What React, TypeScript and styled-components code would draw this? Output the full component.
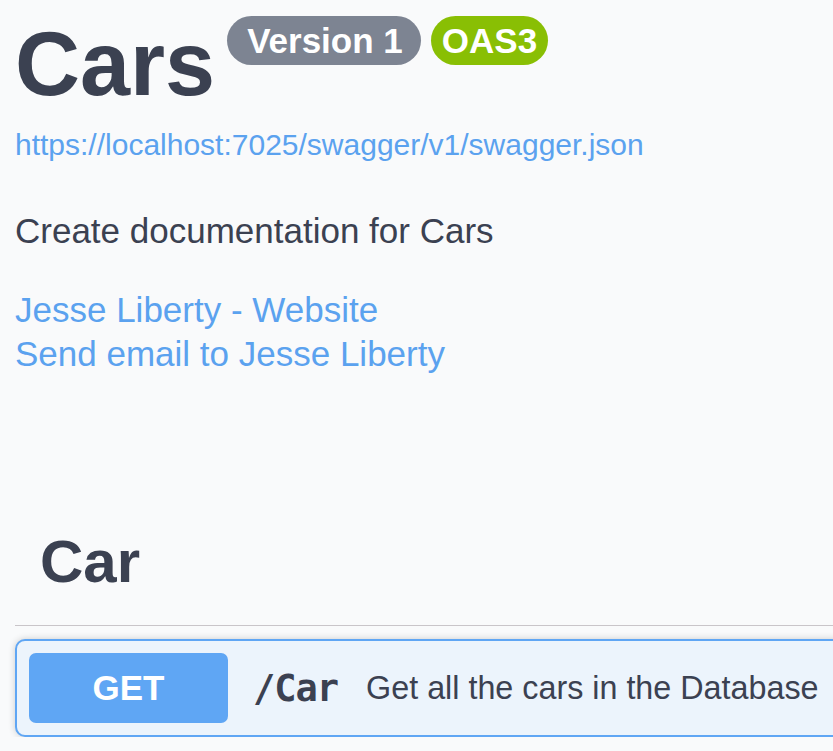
import React from 'react';
import styled, { createGlobalStyle } from 'styled-components';

const GlobalStyle = createGlobalStyle`
    html, body {
        margin: 0;
        padding: 0;
        background: #f9fafb;
        overflow: hidden;
    }

    body {
        font-family: "Liberation Sans", Arial, sans-serif;
        color: #3b4151;
    }
`;

// the op block runs off the right edge in the reference, so the page is wider than the window
const Page = styled.div`
    width: 960px;
    padding-left: 15px;
`;

const Info = styled.div`
    display: flex;
    flex-direction: column;
    align-items: flex-start;
`;

const HeaderRow = styled.div`
    display: flex;
    align-items: flex-start;
`;

const Title = styled.h1`
    margin: 19px 0 0 0;
    font-size: 90px;
    line-height: 90px;
    font-weight: 700;
    color: #3b4151;
`;

const Badges = styled.div`
    display: flex;
    gap: 10px;
    margin: 16px 0 0 12px;
`;

const Badge = styled.span<{ tone: string; padLeft: number; padRight: number }>`
    display: inline-block;
    height: 49px;
    line-height: 49px;
    padding: 0 ${({ padRight }) => padRight}px 0 ${({ padLeft }) => padLeft}px;
    border-radius: 25px;
    background: ${({ tone }) => tone};
    color: #fff;
    font-size: 35px;
    font-weight: 700;
`;

const BaseUrl = styled.a`
    display: block;
    margin-top: 18px;
    font-size: 30px;
    line-height: 36px;
    color: #5ba2ef;
    text-decoration: none;
`;

const Description = styled.p`
    margin: 46px 0 0 0;
    font-size: 35px;
    line-height: 44px;
    color: #3b4151;
`;

const Contacts = styled.div`
    margin-top: 35px;
    display: flex;
    flex-direction: column;
`;

const ContactLink = styled.a`
    font-size: 35px;
    line-height: 44px;
    color: #5ba2ef;
    text-decoration: none;
`;

const TagHeader = styled.h3`
    margin: 156px 0 13px 0;
    padding: 0 0 33px 25px;
    font-size: 60px;
    line-height: 60px;
    font-weight: 700;
    color: #3b4151;
    border-bottom: 1px solid #c9c5c9;
`;

const OpBlock = styled.div`
    border: 2px solid #5fa6f4;
    border-radius: 10px;
    background: #ecf4fc;
    box-shadow: 0 0 7px rgba(0, 0, 0, 0.19);
`;

const Summary = styled.div`
    display: flex;
    align-items: center;
    padding: 12px;
`;

const Method = styled.span`
    width: 199px;
    height: 70px;
    line-height: 70px;
    border-radius: 7px;
    background: #5fa6f4;
    color: #fff;
    font-size: 35px;
    font-weight: 700;
    text-align: center;
    flex-shrink: 0;
`;

const Path = styled.span`
    padding: 0 28px 0 25px;
    font-family: "DejaVu Sans Mono", "Liberation Mono", monospace;
    font-size: 37px;
    font-weight: 700;
    letter-spacing: -1px;
    color: #3b4151;
`;

const SummaryText = styled.span`
    font-size: 32.3px;
    color: #3b4151;
    white-space: nowrap;
`;

const App = () => {
    return (
        <>
            <GlobalStyle />
            <Page>
                <Info>
                    <HeaderRow>
                        <Title>Cars</Title>
                        <Badges>
                            <Badge tone="#7d8492" padLeft={20} padRight={18}>Version 1</Badge>
                            <Badge tone="#89bf04" padLeft={11} padRight={11}>OAS3</Badge>
                        </Badges>
                    </HeaderRow>
                    <BaseUrl href="#">https://localhost:7025/swagger/v1/swagger.json</BaseUrl>
                    <Description>Create documentation for Cars</Description>
                    <Contacts>
                        <ContactLink href="#">Jesse Liberty - Website</ContactLink>
                        <ContactLink href="#">Send email to Jesse Liberty</ContactLink>
                    </Contacts>
                </Info>

                <TagHeader>Car</TagHeader>

                <OpBlock>
                    <Summary>
                        <Method>GET</Method>
                        <Path>/Car</Path>
                        <SummaryText>Get all the cars in the Database</SummaryText>
                    </Summary>
                </OpBlock>
            </Page>
        </>
    );
};

export default App;
